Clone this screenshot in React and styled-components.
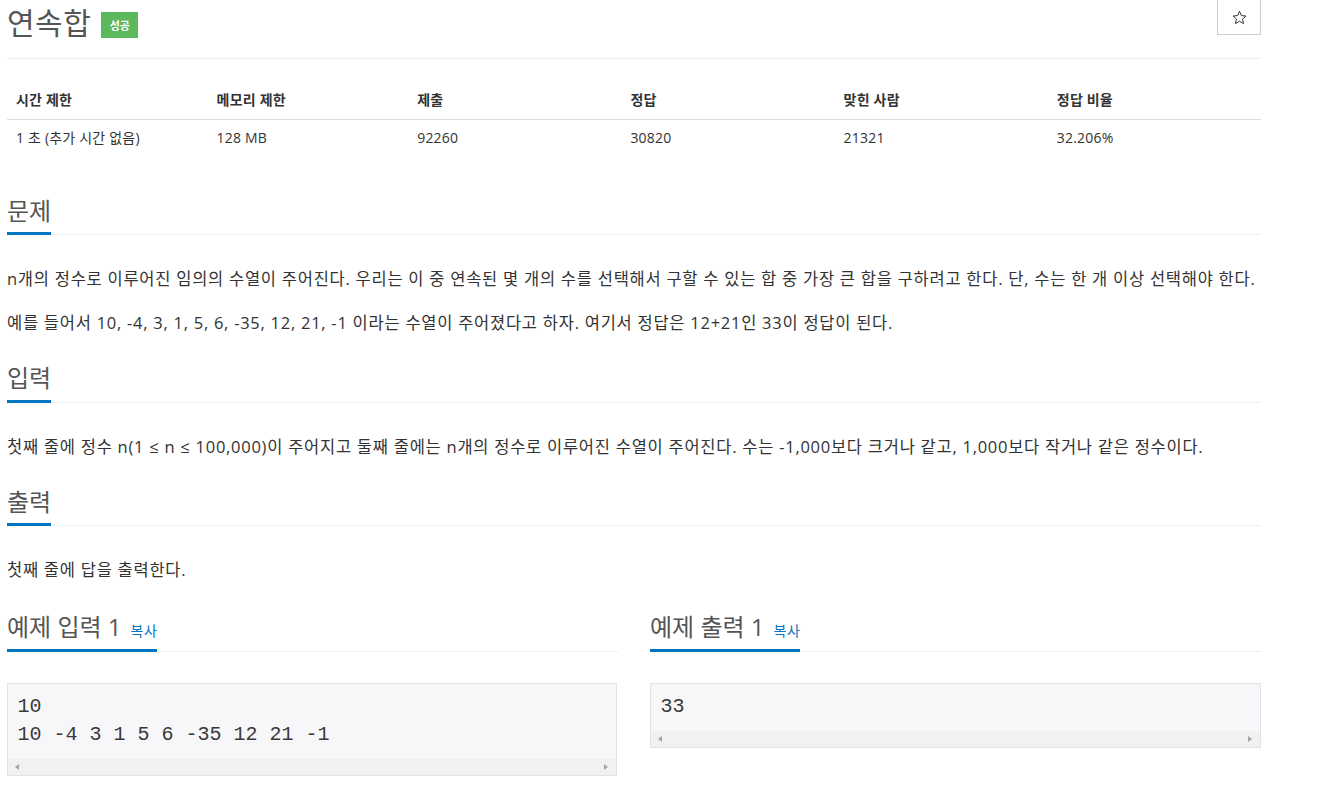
import React from "react";
import styled, { createGlobalStyle } from "styled-components";

const GlobalStyle = createGlobalStyle`
  html, body {
    margin: 0;
    padding: 0;
    background: #fff;
  }
  body {
    font-family: "Open Sans", "Noto Sans CJK KR", sans-serif;
    color: #333;
    font-size: 14px;
  }
`;

const Page = styled.div`
  width: 1254px;
  margin-left: 7px;
  padding-bottom: 20px;
`;

const TitleBar = styled.div`
  display: flex;
  align-items: center;
  justify-content: space-between;
  height: 59px;
  border-bottom: 1px solid #eee;
  box-sizing: border-box;
`;

const TitleLeft = styled.div`
  display: flex;
  align-items: center;
  gap: 10px;
  margin-top: -13px;
`;

const Title = styled.h1`
  margin: 0;
  font-size: 30px;
  font-weight: 400;
  color: #555;
  line-height: 1.1;
  letter-spacing: 0.5px;
`;

const Badge = styled.span`
  display: inline-flex;
  align-items: center;
  justify-content: center;
  background: #5cb85c;
  color: #fff;
  font-size: 11px;
  font-weight: 700;
  width: 37px;
  height: 26px;
  margin-top: 5px;
`;

const StarButton = styled.button`
  align-self: flex-start;
  width: 44px;
  height: 36px;
  margin-top: -1px;
  border: 1px solid #ccc;
  background: #fff;
  display: flex;
  align-items: center;
  justify-content: center;
  padding: 0;
  box-sizing: border-box;
`;

const InfoTable = styled.table`
  width: 100%;
  table-layout: fixed;
  border-collapse: collapse;
  margin-top: 24px;
  font-size: 14px;
  line-height: 20px;
  letter-spacing: 0.2px;
  th, td {
    text-align: left;
    padding: 8px 9px;
  }
  th {
    font-weight: 700;
    padding: 7px 9px 9px;
    border-bottom: 1px solid #ddd;
  }
`;

const NarrowCol = styled.col`
  width: 200.6px;
`;

const Section = styled.section`
  margin-top: ${(p) => p.top || 29}px;
`;

const Headline = styled.div`
  border-bottom: 1px dotted #dfe3e8;
`;

const HeadText = styled.h2`
  display: inline-block;
  margin: 0 0 -1px;
  padding-bottom: 8px;
  font-size: 24px;
  line-height: 1.1;
  font-weight: 400;
  color: #555;
  border-bottom: 3px solid #0076c0;
`;

const CopyLink = styled.a`
  font-size: 14px;
  letter-spacing: 0.6px;
  color: #0076c0;
  margin-left: 9px;
  text-decoration: none;
`;

const Text = styled.p`
  margin: 31px 0 0;
  font-size: 16.5px;
  letter-spacing: 0.74px;
  line-height: 26px;
  & + & {
    margin-top: 18px;
  }
`;

const SampleGrid = styled.div`
  display: grid;
  grid-template-columns: 610px 611px;
  column-gap: 33px;
  align-items: start;
  margin-top: 31px;
`;

const CodeBox = styled.div`
  margin-top: 31px;
  background: #f7f7f9;
  border: 1px solid #e1e1e8;
`;

const Pre = styled.pre`
  margin: 0;
  padding: 9.5px;
  font-family: "Liberation Mono", monospace;
  font-size: 20px;
  line-height: 28px;
  color: #3a3a3a;
  overflow: hidden;
`;

const ScrollTrack = styled.div`
  height: 16px;
  background: #f1f1f1;
  display: flex;
  align-items: center;
  justify-content: space-between;
  padding: 0 8px 0 7px;
`;

const Arrow = styled.span`
  width: 0;
  height: 0;
  border-top: 3.5px solid transparent;
  border-bottom: 3.5px solid transparent;
  ${(p) =>
    p.dir === "left"
      ? "border-right: 4px solid #a3a3a3;"
      : "border-left: 4px solid #a3a3a3;"}
`;

const Star = () => (
  <svg width="15" height="15" viewBox="0 0 24 24" fill="none" stroke="#333" strokeWidth="1.6" strokeLinejoin="miter">
    <polygon points="12,2 14.9,8.9 22.4,9.6 16.8,14.5 18.5,21.8 12,18 5.5,21.8 7.2,14.5 1.6,9.6 9.1,8.9" />
  </svg>
);

const stats = [
  ["시간 제한", "1 초 (추가 시간 없음)"],
  ["메모리 제한", "128 MB"],
  ["제출", "92260"],
  ["정답", "30820"],
  ["맞힌 사람", "21321"],
  ["정답 비율", "32.206%"],
];

const SampleBox = ({ title, body }) => (
  <div>
    <Headline>
      <HeadText>
        {title}
        <CopyLink href="#">복사</CopyLink>
      </HeadText>
    </Headline>
    <CodeBox>
      <Pre>{body}</Pre>
      <ScrollTrack>
        <Arrow dir="left" />
        <Arrow dir="right" />
      </ScrollTrack>
    </CodeBox>
  </div>
);

export default function App() {
  return (
    <>
      <GlobalStyle />
      <Page>
        <TitleBar>
          <TitleLeft>
            <Title>연속합</Title>
            <Badge>성공</Badge>
          </TitleLeft>
          <StarButton>
            <Star />
          </StarButton>
        </TitleBar>

        <InfoTable>
          <colgroup>
            <NarrowCol />
            <NarrowCol />
            <col />
            <col />
            <col />
            <col />
          </colgroup>
          <thead>
            <tr>
              {stats.map(([h]) => (
                <th key={h}>{h}</th>
              ))}
            </tr>
          </thead>
          <tbody>
            <tr>
              {stats.map(([h, v]) => (
                <td key={h}>{v}</td>
              ))}
            </tr>
          </tbody>
        </InfoTable>

        <Section top={42}>
          <Headline>
            <HeadText>문제</HeadText>
          </Headline>
          <Text>
            n개의 정수로 이루어진 임의의 수열이 주어진다. 우리는 이 중 연속된 몇 개의 수를 선택해서 구할 수 있는 합 중 가장 큰 합을 구하려고 한다. 단, 수는 한 개 이상 선택해야 한다.
          </Text>
          <Text>
            예를 들어서 10, -4, 3, 1, 5, 6, -35, 12, 21, -1 이라는 수열이 주어졌다고 하자. 여기서 정답은 12+21인 33이 정답이 된다.
          </Text>
        </Section>

        <Section>
          <Headline>
            <HeadText>입력</HeadText>
          </Headline>
          <Text>
            첫째 줄에 정수 n(1 ≤ n ≤ 100,000)이 주어지고 둘째 줄에는 n개의 정수로 이루어진 수열이 주어진다. 수는 -1,000보다 크거나 같고, 1,000보다 작거나 같은 정수이다.
          </Text>
        </Section>

        <Section>
          <Headline>
            <HeadText>출력</HeadText>
          </Headline>
          <Text>첫째 줄에 답을 출력한다.</Text>
        </Section>

        <SampleGrid>
          <SampleBox title="예제 입력 1" body={"10\n10 -4 3 1 5 6 -35 12 21 -1"} />
          <SampleBox title="예제 출력 1" body={"33"} />
        </SampleGrid>
      </Page>
    </>
  );
}
